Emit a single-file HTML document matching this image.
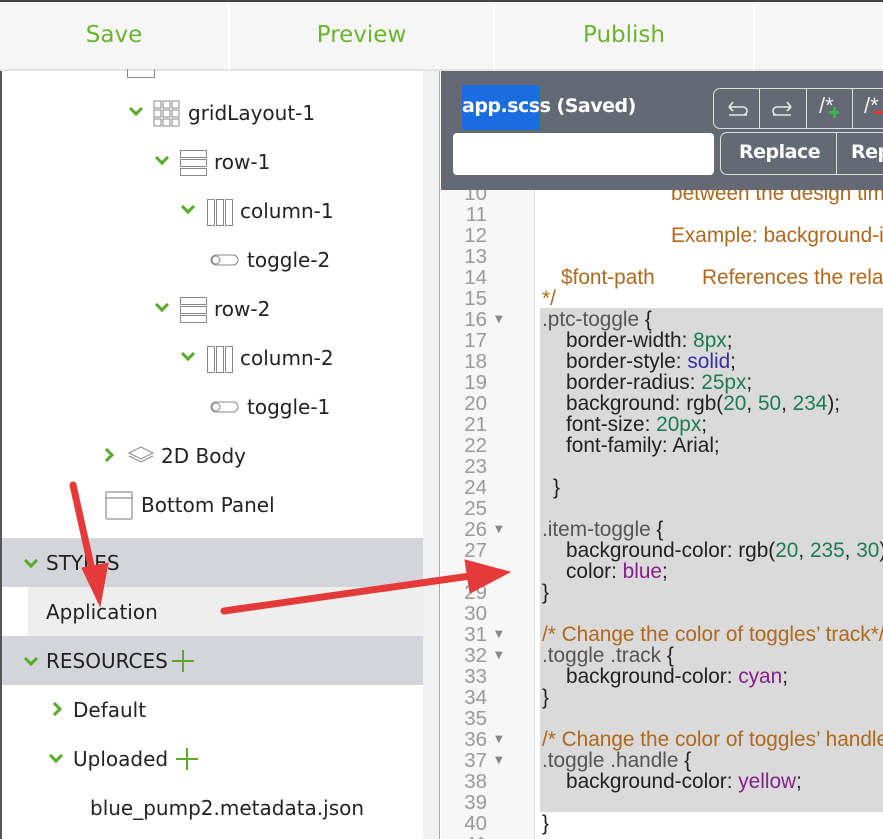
<!DOCTYPE html>
<html><head><meta charset="utf-8"><style>
*{margin:0;padding:0;box-sizing:border-box}
body{width:883px;height:839px;overflow:hidden;position:relative;background:#fff;font-family:"DejaVu Sans","Liberation Sans",sans-serif;color:#222}
.top{position:absolute;left:0;top:0;width:883px;height:71px;background:#f6f6f6;border-top:2px solid #444;border-bottom:2px solid #e4e4e4}
.tab{position:absolute;top:0;height:68px;line-height:66px;color:#6ab42e;font-size:23px;text-align:center;border-right:2px solid #fff}
.left{position:absolute;left:0;top:71px;width:423px;height:768px;background:#fff;border-left:2px solid #555}
.strip{position:absolute;left:423px;top:71px;width:17px;height:768px;background:#f0f0f0;border-right:1px solid #aaa}
.it{position:absolute;font-size:20px;line-height:24px;color:#222}
.chev{position:absolute;width:10px;height:10px;border-right:3px solid #5aab2a;border-bottom:3px solid #5aab2a;transform:rotate(45deg)}
.chr{transform:rotate(-45deg)}
.band{position:absolute;left:2px;width:421px;height:49px;background:#d4d5da}
.ed{position:absolute;left:441px;top:71px;width:442px;height:768px;background:#fff;overflow:hidden}
.gut{position:absolute;left:0;top:0;width:94px;height:768px;background:#f7f7f7;border-right:1px solid #ddd}
.hdr{position:absolute;left:0;top:0;width:442px;height:119px;background:#646a73;z-index:3}
.ln{position:absolute;left:0;height:21px;line-height:21px;font-family:"Liberation Sans",Arial,sans-serif;font-size:20.8px;white-space:pre}
.num{position:absolute;width:46px;text-align:right;color:#999;font-family:"Liberation Sans",Arial,sans-serif;font-size:20.5px;line-height:21px}
.fold{position:absolute;left:54px;color:#888;font-size:10px;line-height:21px}
.c{color:#b0681c}.n{color:#1d7a55}.k{color:#3a2ea8}.p{color:#86208a}.s{color:#555}
</style></head><body>
<div class="top">
 <div class="tab" style="left:0;width:230px">Save</div>
 <div class="tab" style="left:230px;width:265px">Preview</div>
 <div class="tab" style="left:495px;width:260px">Publish</div>
</div>
<div class="left">
 <div style="position:absolute;left:125px;top:-2px;width:28px;height:9px;border:1px solid #888;border-top:none"></div>
 <div class="chev" style="left:129px;top:33px"></div>
 <svg style="position:absolute;left:151px;top:29px" width="28" height="28"><g fill="none" stroke="#888" stroke-width="1"><rect x="1" y="1" width="7" height="7"/><rect x="10" y="1" width="7" height="7"/><rect x="19" y="1" width="7" height="7"/><rect x="1" y="10" width="7" height="7"/><rect x="10" y="10" width="7" height="7"/><rect x="19" y="10" width="7" height="7"/><rect x="1" y="19" width="7" height="7"/><rect x="10" y="19" width="7" height="7"/><rect x="19" y="19" width="7" height="7"/></g></svg>
 <div class="it" style="left:186px;top:30px">gridLayout-1</div>
 <div class="chev" style="left:155px;top:82px"></div>
 <svg style="position:absolute;left:177px;top:78px" width="29" height="28"><g fill="none" stroke="#888"><rect x="1.5" y="1.5" width="26" height="7"/><rect x="1.5" y="10.5" width="26" height="7"/><rect x="1.5" y="19.5" width="26" height="7"/></g></svg>
 <div class="it" style="left:212px;top:79px">row-1</div>
 <div class="chev" style="left:181px;top:131px"></div>
 <svg style="position:absolute;left:204px;top:127px" width="28" height="28"><g fill="none" stroke="#888"><rect x="1.5" y="1.5" width="7" height="26"/><rect x="10.5" y="1.5" width="7" height="26"/><rect x="19.5" y="1.5" width="7" height="26"/></g></svg>
 <div class="it" style="left:238px;top:128px">column-1</div>
 <svg style="position:absolute;left:208px;top:183px" width="30" height="12"><rect x="1" y="1" width="27" height="10" rx="5" fill="none" stroke="#888"/><circle cx="6" cy="6" r="4" fill="none" stroke="#888"/></svg>
 <div class="it" style="left:245px;top:177px">toggle-2</div>
 <div class="chev" style="left:155px;top:229px"></div>
 <svg style="position:absolute;left:177px;top:225px" width="29" height="28"><g fill="none" stroke="#888"><rect x="1.5" y="1.5" width="26" height="7"/><rect x="1.5" y="10.5" width="26" height="7"/><rect x="1.5" y="19.5" width="26" height="7"/></g></svg>
 <div class="it" style="left:212px;top:226px">row-2</div>
 <div class="chev" style="left:181px;top:278px"></div>
 <svg style="position:absolute;left:204px;top:274px" width="28" height="28"><g fill="none" stroke="#888"><rect x="1.5" y="1.5" width="7" height="26"/><rect x="10.5" y="1.5" width="7" height="26"/><rect x="19.5" y="1.5" width="7" height="26"/></g></svg>
 <div class="it" style="left:238px;top:275px">column-2</div>
 <svg style="position:absolute;left:208px;top:330px" width="30" height="12"><rect x="1" y="1" width="27" height="10" rx="5" fill="none" stroke="#888"/><circle cx="6" cy="6" r="4" fill="none" stroke="#888"/></svg>
 <div class="it" style="left:245px;top:324px">toggle-1</div>
 <div class="chev chr" style="left:100px;top:379px"></div>
 <svg style="position:absolute;left:125px;top:375px" width="28" height="18"><g fill="none" stroke="#888"><path d="M2 7 L14 1 L26 7 L14 13 Z"/><path d="M2 10 L14 16 L26 10"/></g></svg>
 <div class="it" style="left:159px;top:373px">2D Body</div>
 <svg style="position:absolute;left:103px;top:420px" width="28" height="29"><rect x="1" y="1" width="26" height="27" rx="1" fill="none" stroke="#777"/><line x1="1" y1="7" x2="27" y2="7" stroke="#777"/></svg>
 <div class="it" style="left:139px;top:422px">Bottom Panel</div>
 <div class="band" style="left:0;top:467px"></div>
 <div class="chev" style="left:24px;top:485px"></div>
 <div class="it" style="left:44px;top:480px">STYLES</div>
 <div style="position:absolute;left:26px;top:516px;width:395px;height:49px;background:#eeeeee"></div>
 <div class="it" style="left:44px;top:529px">Application</div>
 <div class="band" style="left:0;top:565px"></div>
 <div class="chev" style="left:24px;top:583px"></div>
 <div class="it" style="left:44px;top:578px">RESOURCES</div>
 <div style="position:absolute;left:170px;top:579px;width:22px;height:22px"><div style="position:absolute;left:10px;top:0;width:2px;height:22px;background:#5aab2a"></div><div style="position:absolute;left:0;top:10px;width:22px;height:2px;background:#5aab2a"></div></div>
 <div class="chev chr" style="left:48px;top:633px"></div>
 <div class="it" style="left:71px;top:627px">Default</div>
 <div class="chev" style="left:49px;top:680px"></div>
 <div class="it" style="left:71px;top:676px">Uploaded</div>
 <div style="position:absolute;left:174px;top:677px;width:22px;height:22px"><div style="position:absolute;left:10px;top:0;width:2px;height:22px;background:#5aab2a"></div><div style="position:absolute;left:0;top:10px;width:22px;height:2px;background:#5aab2a"></div></div>
 <div class="it" style="left:88px;top:725px">blue_pump2.metadata.json</div>
</div>
<div class="strip"></div>
<div class="ed">
 <div class="gut"></div>
 <div style="position:absolute;left:99px;top:237px;width:343px;height:504px;background:#dadada"></div>
 <div id="code"></div>
 <div class="hdr">
  <div style="position:absolute;left:21px;top:14px;width:78px;height:45px;background:#1a6de0"></div>
  <div style="position:absolute;left:21px;top:24px;color:#fff;font-size:19px;font-weight:bold;font-family:'DejaVu Sans',sans-serif;letter-spacing:-0.5px">app.scss (Saved)</div>
  <div style="position:absolute;left:272px;top:17px;width:190px;height:41px;border:1px solid #ddd;border-radius:7px"></div>
  <div style="position:absolute;left:318px;top:17px;width:1px;height:41px;background:#ddd"></div>
  <div style="position:absolute;left:365px;top:17px;width:1px;height:41px;background:#ddd"></div>
  <div style="position:absolute;left:411px;top:17px;width:1px;height:41px;background:#ddd"></div>
  <svg style="position:absolute;left:282px;top:26px" width="28" height="22"><path d="M24 18 H6 M6 10 H20 A4 4 0 0 1 20 18 M6 10 L10 5 M6 10 L10 14" fill="none" stroke="#e8e8e8" stroke-width="1.6"/></svg>
  <svg style="position:absolute;left:328px;top:26px" width="28" height="22"><path d="M4 18 H22 M22 10 H8 A4 4 0 0 0 8 18 M22 10 L18 5 M22 10 L18 14" fill="none" stroke="#e8e8e8" stroke-width="1.6"/></svg>
  <div style="position:absolute;left:378px;top:22px;color:#eee;font-size:22px;font-family:'Liberation Sans',sans-serif">/*</div>
  <div style="position:absolute;left:388px;top:40px;width:10px;height:3px;background:#3bb34a"></div><div style="position:absolute;left:391.5px;top:36px;width:3px;height:11px;background:#3bb34a"></div>
  <div style="position:absolute;left:423px;top:22px;color:#eee;font-size:22px;font-family:'Liberation Sans',sans-serif">/*</div>
  <div style="position:absolute;left:433px;top:40px;width:10px;height:3px;background:#e33"></div>
  <div style="position:absolute;left:12px;top:62px;width:261px;height:42px;background:#fff;border-radius:4px"></div>
  <div style="position:absolute;left:279px;top:61px;width:180px;height:43px;border:1px solid #ddd;border-radius:7px"></div>
  <div style="position:absolute;left:395px;top:61px;width:1px;height:43px;background:#ddd"></div>
  <div style="position:absolute;left:298px;top:70px;color:#fff;font-size:19px;font-weight:bold;font-family:'DejaVu Sans',sans-serif;letter-spacing:-0.5px">Replace</div>
  <div style="position:absolute;left:410px;top:70px;color:#fff;font-size:19px;font-weight:bold;font-family:'DejaVu Sans',sans-serif;letter-spacing:-0.5px">Rep</div>
 </div>
</div>
<svg style="position:absolute;left:0;top:0;z-index:5" width="883" height="839">
 <g stroke="#e53a3a" stroke-width="7" stroke-linecap="round" fill="#e53a3a">
  <line x1="73" y1="485" x2="92" y2="570"/>
  <polygon points="82,568 108,563 100,606" stroke-width="1"/>
  <line x1="224" y1="611" x2="470" y2="576"/>
  <polygon points="465,560 510,572 470,593" stroke-width="1"/>
 </g>
</svg>
<script>
var L={10:[[230,'<span class="c">between the design time and runtime</span>']],12:[[230,'<span class="c">Example: background-image</span>']],
14:[[120,'<span class="c">$font-path</span>'],[261,'<span class="c">References the relative path</span>']],15:[[101,'<span class="c">*/</span>']],
16:[[101,'<span class="s">.ptc-toggle</span> {']],17:[[125,'border-width: <span class="n">8px</span>;']],18:[[125,'border-style: <span class="k">solid</span>;']],
19:[[125,'border-radius: <span class="n">25px</span>;']],20:[[125,'background: rgb(<span class="n">20</span>, <span class="n">50</span>, <span class="n">234</span>);']],
21:[[125,'font-size: <span class="n">20px</span>;']],22:[[125,'font-family: Arial;']],24:[[112,'}']],26:[[101,'<span class="s">.item-toggle</span> {']],
27:[[125,'background-color: rgb(<span class="n">20</span>, <span class="n">235</span>, <span class="n">30</span>);']],28:[[125,'color: <span class="p">blue</span>;']],29:[[101,'}']],
31:[[101,'<span class="c">/* Change the color of toggles’ track*/</span>']],32:[[101,'<span class="s">.toggle .track</span> {']],33:[[125,'background-color: <span class="p">cyan</span>;']],34:[[101,'}']],
36:[[101,'<span class="c">/* Change the color of toggles’ handle*/</span>']],37:[[101,'<span class="s">.toggle .handle</span> {']],38:[[125,'background-color: <span class="p">yellow</span>;']],40:[[101,'}']]};
var folds=[16,26,31,32,36,37],h='';
for(var i=9;i<=42;i++){var t=(i-10)*21+111.5;
h+='<div class="num" style="top:'+t+'px">'+i+'</div>';
if(folds.indexOf(i)>=0)h+='<div class="fold" style="top:'+t+'px">▼</div>';
(L[i]||[]).forEach(function(s){h+='<div class="ln" style="top:'+t+'px;left:'+s[0]+'px">'+s[1]+'</div>';});}
document.getElementById('code').innerHTML=h;
</script>
</body></html>
